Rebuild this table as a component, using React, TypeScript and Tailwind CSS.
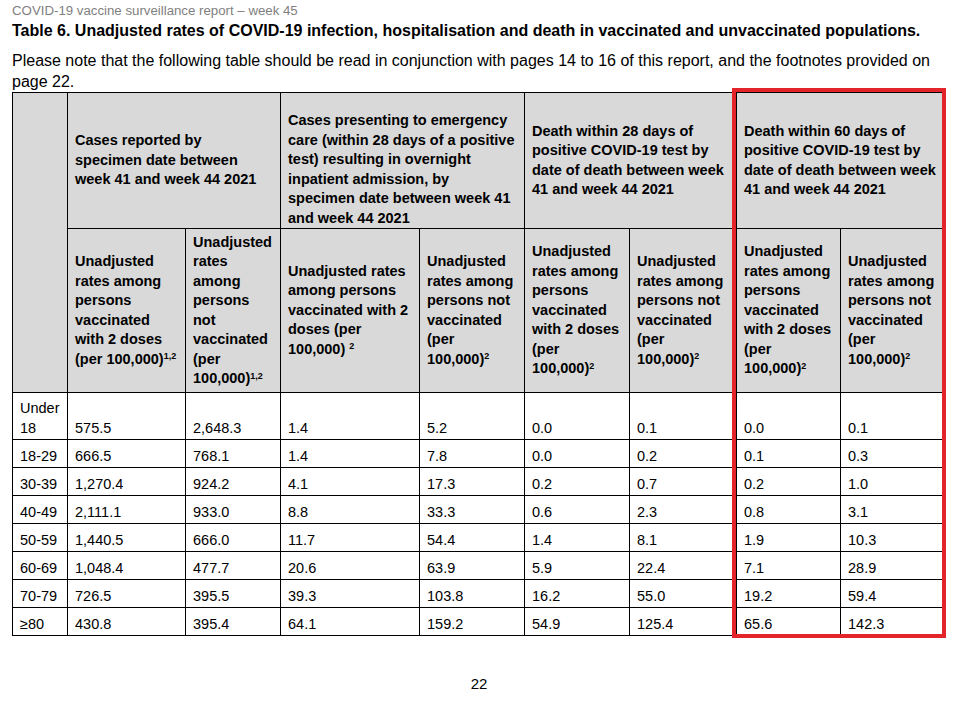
import React from 'react';

type Row = { age: React.ReactNode; values: string[] };

const rows: Row[] = [
  { age: <>Under<br />18</>, values: ['575.5', '2,648.3', '1.4', '5.2', '0.0', '0.1', '0.0', '0.1'] },
  { age: '18-29', values: ['666.5', '768.1', '1.4', '7.8', '0.0', '0.2', '0.1', '0.3'] },
  { age: '30-39', values: ['1,270.4', '924.2', '4.1', '17.3', '0.2', '0.7', '0.2', '1.0'] },
  { age: '40-49', values: ['2,111.1', '933.0', '8.8', '33.3', '0.6', '2.3', '0.8', '3.1'] },
  { age: '50-59', values: ['1,440.5', '666.0', '11.7', '54.4', '1.4', '8.1', '1.9', '10.3'] },
  { age: '60-69', values: ['1,048.4', '477.7', '20.6', '63.9', '5.9', '22.4', '7.1', '28.9'] },
  { age: '70-79', values: ['726.5', '395.5', '39.3', '103.8', '16.2', '55.0', '19.2', '59.4'] },
  { age: '≥80', values: ['430.8', '395.4', '64.1', '159.2', '54.9', '125.4', '65.6', '142.3'] },
];

const colWidths = [55, 118, 95, 139, 105, 105, 107, 104, 102];

const Sup: React.FC<{ children: React.ReactNode }> = ({ children }) => (
  <sup className="text-[9px] leading-none">{children}</sup>
);

const headCell = 'border border-black bg-[#d9d9d9] pl-[7px] pr-[5px] align-middle text-left font-bold text-[14.5px] leading-[19.5px]';
const bodyCell = 'border border-black px-[7px] align-bottom pb-[1px] text-[14.5px] leading-[20px]';

const App: React.FC = () => {
  return (
    <div className="w-[975px] h-[705px] bg-white text-black font-['Liberation_Sans',Arial,sans-serif] overflow-hidden">
      <div className="px-3 pt-[3px]">
        <p className="text-[13.25px] leading-[16px] text-[#7f7f7f]">COVID-19 vaccine surveillance report – week 45</p>
        <h1 className="mt-[2px] text-[16px] leading-[20px] font-bold">
          Table 6. Unadjusted rates of COVID-19 infection, hospitalisation and death in vaccinated and unvaccinated populations.
        </h1>
        <p className="mt-[9px] w-[935px] text-[16px] leading-[21px]">
          Please note that the following table should be read in conjunction with pages 14 to 16 of this report, and the footnotes provided on page 22.
        </p>

        <div className="relative w-[930px]">
          <table className="table-fixed border-collapse w-[930px]">
            <colgroup>
              {colWidths.map((w, i) => (
                <col key={i} style={{ width: w }} />
              ))}
            </colgroup>
            <thead>
              <tr className="h-[136px]">
                <th rowSpan={2} className={headCell}></th>
                <th colSpan={2} className={headCell}>
                  Cases reported by<br />specimen date between<br />week 41 and week 44 2021
                </th>
                <th colSpan={2} className={`${headCell} pt-[18px]`}>
                  Cases presenting to emergency care (within 28 days of a positive test) resulting in overnight inpatient admission, by specimen date between week 41 and week 44 2021
                </th>
                <th colSpan={2} className={headCell}>
                  Death within 28 days of positive COVID-19 test by date of death between week 41 and week 44 2021
                </th>
                <th colSpan={2} className={headCell}>
                  Death within 60 days of positive COVID-19 test by date of death between week 41 and week 44 2021
                </th>
              </tr>
              <tr className="h-[164px]">
                <th className={headCell}>
                  Unadjusted rates among persons vaccinated with 2 doses (per 100,000)<Sup>1,2</Sup>
                </th>
                <th className={headCell}>
                  Unadjusted rates among persons not vaccinated (per 100,000)<Sup>1,2</Sup>
                </th>
                <th className={headCell}>
                  Unadjusted rates among persons vaccinated with 2 doses (per 100,000) <Sup>2</Sup>
                </th>
                <th className={headCell}>
                  Unadjusted rates among persons not vaccinated (per 100,000)<Sup>2</Sup>
                </th>
                <th className={headCell}>
                  Unadjusted rates among persons vaccinated with 2 doses (per 100,000)<Sup>2</Sup>
                </th>
                <th className={headCell}>
                  Unadjusted rates among persons not vaccinated (per<br />100,000)<Sup>2</Sup>
                </th>
                <th className={headCell}>
                  Unadjusted rates among persons vaccinated with 2 doses (per 100,000)<Sup>2</Sup>
                </th>
                <th className={headCell}>
                  Unadjusted rates among persons not vaccinated (per 100,000)<Sup>2</Sup>
                </th>
              </tr>
            </thead>
            <tbody>
              {rows.map((row, i) => (
                <tr key={i} className={i === 0 ? 'h-[47px]' : 'h-[28px]'}>
                  <td className={bodyCell}>{row.age}</td>
                  {row.values.map((v, j) => (
                    <td key={j} className={bodyCell}>{v}</td>
                  ))}
                </tr>
              ))}
            </tbody>
          </table>

          {/* red highlight drawn over the 60-day columns */}
          <div className="absolute left-[720px] -top-[4px] w-[214px] h-[550px] border-4 border-[#e3242b] pointer-events-none" />
        </div>

        <p className="mt-[40px] w-[934px] text-center text-[15px] leading-[16px]">22</p>
      </div>
    </div>
  );
};

export default App;
